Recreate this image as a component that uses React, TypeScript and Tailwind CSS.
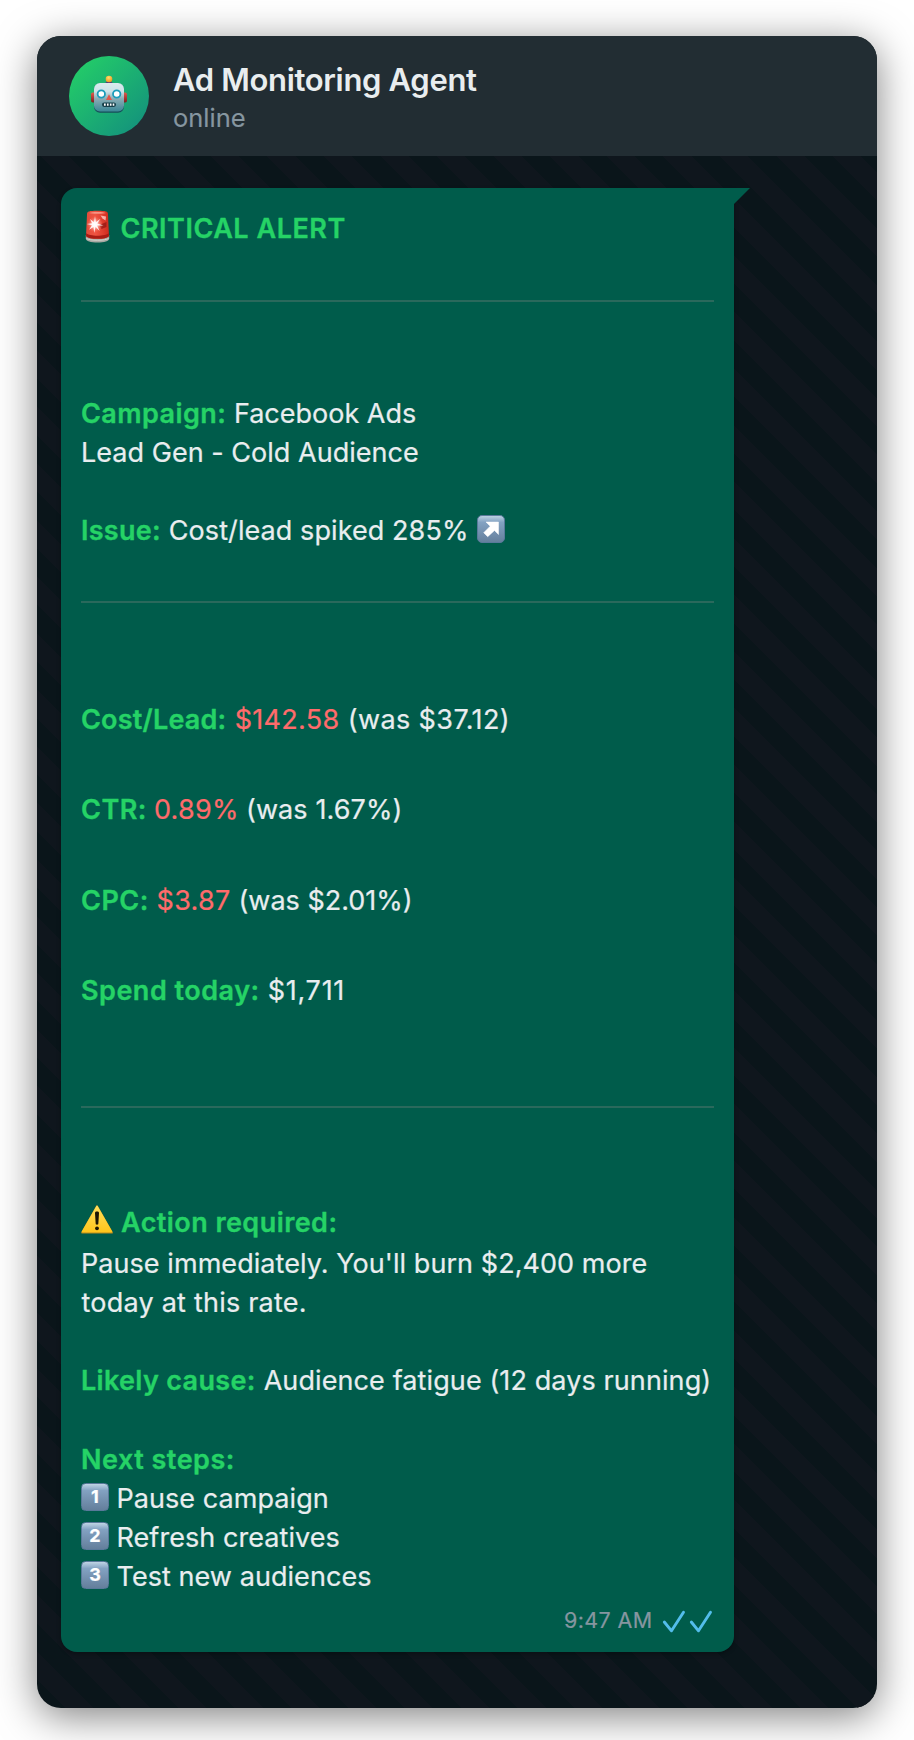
import type { ReactNode } from "react";

const Label = ({ children, className = "tracking-[0.44px]" }: { children: ReactNode; className?: string }) => (
  <span className={`font-semibold text-[#25d366] [-webkit-text-stroke:0.35px_#25d366] ${className}`}>{children}</span>
);

const Row = ({ children, className = "gap-2" }: { children: ReactNode; className?: string }) => (
  <div className={`flex h-[39.2px] items-start whitespace-nowrap leading-[39.2px] ${className}`}>{children}</div>
);

const Rule = ({ className }: { className: string }) => <div className={`h-0.5 bg-[#2a695c] ${className}`} />;

function Robot() {
  return (
    <svg width="38" height="38" viewBox="0 0 38 38">
      <defs>
        <linearGradient id="rb-face" x1="0" y1="0" x2="0" y2="1">
          <stop offset="0" stopColor="#dcebee" />
          <stop offset="0.3" stopColor="#cbe3e8" />
          <stop offset="0.55" stopColor="#8badb5" />
          <stop offset="1" stopColor="#3a8796" />
        </linearGradient>
        <linearGradient id="rb-ear" x1="0" y1="0" x2="0" y2="1">
          <stop offset="0" stopColor="#e05a4c" />
          <stop offset="1" stopColor="#7d1d22" />
        </linearGradient>
        <radialGradient id="rb-bulb" cx="0.45" cy="0.3" r="0.7">
          <stop offset="0" stopColor="#ffe36b" />
          <stop offset="1" stopColor="#f0901c" />
        </radialGradient>
      </defs>
      <rect x="1" y="17.5" width="5" height="10" rx="1.8" fill="url(#rb-ear)" />
      <rect x="32" y="17.5" width="5" height="10" rx="1.8" fill="url(#rb-ear)" />
      <path d="M15 9.5c0-2.4 1.6-3.2 4-3.2s4 .8 4 3.2z" fill="#54407c" />
      <circle cx="19" cy="4" r="3.3" fill="url(#rb-bulb)" />
      <rect x="4" y="8.5" width="30" height="29.3" rx="6" fill="#174d5a" />
      <rect x="4" y="8" width="30" height="28.5" rx="6" fill="url(#rb-face)" />
      <circle cx="11.3" cy="19" r="3.7" fill="#fff" stroke="#1b9dbb" strokeWidth="1.8" />
      <circle cx="26.7" cy="19" r="3.7" fill="#fff" stroke="#1b9dbb" strokeWidth="1.8" />
      <path d="M19 19.2l3 5.8h-6z" fill="#e2574c" />
      <rect x="12" y="27.5" width="14" height="4.4" rx="2.1" fill="#173f49" />
      <path d="M14 29.7h1.7M17 29.7h1.6M19.9 29.7h1.6M22.7 29.7h1.6" stroke="#fff" strokeWidth="2.3" />
    </svg>
  );
}

function Siren() {
  return (
    <svg width="25" height="33" viewBox="0 0 25 33">
      <defs>
        <linearGradient id="sr-dome" x1="0" y1="0" x2="1" y2="0">
          <stop offset="0" stopColor="#e04a3a" />
          <stop offset="0.4" stopColor="#f05442" />
          <stop offset="1" stopColor="#cf2a1d" />
        </linearGradient>
        <radialGradient id="sr-glow">
          <stop offset="0" stopColor="#fff" />
          <stop offset="0.35" stopColor="#ffc9c0" stopOpacity="0.85" />
          <stop offset="1" stopColor="#ff6a55" stopOpacity="0" />
        </radialGradient>
      </defs>
      <path d="M.8 25h23.4v3.5c0 2.7-5 4-11.7 4S.8 31.2.8 28.5z" fill="#a9a9a3" />
      <path d="M1.5 28.5c3 2.3 19 2.3 22 0" stroke="#d5d4cd" strokeWidth="1" fill="none" />
      <path d="M2 4.5C2 1.3 4 .8 12.5.8S23 1.3 23 4.5l1 21.5c-2.5 3.8-20.5 3.8-23 0z" fill="url(#sr-dome)" />
      <path d="M1.2 23c3 3.6 19.6 3.6 22.6 0l.2 3c-2.5 3.8-20.5 3.8-23 0z" fill="#a91c14" />
      <path d="M4 3c2-1.5 15-1.5 17 0-2 1-15 1-17 0z" fill="#f79484" />
      <path d="M15.5 5.5l5.5 1-.5 4-3-2z" fill="#fcd9d4" opacity="0.75" />
      <path d="M14 15l7.5-3v5l-5 2z" fill="#8f1511" opacity="0.7" />
      <circle cx="10" cy="14.5" r="8" fill="url(#sr-glow)" />
      <path d="M10 6l.9 6.2 4.6-3.4-3.3 4.7 6.3 1.9-6.5.2 2.7 5.4-4.2-4.2L9.2 23l-.7-6-4.5 2.7 3-4.5L1.8 14l5.3-.7L5 9l4 3.2z" fill="#fff" opacity="0.9" />
    </svg>
  );
}

function Warning() {
  return (
    <svg width="32" height="29" viewBox="0 0 32 29">
      <defs>
        <linearGradient id="wn" x1="0" y1="0" x2="0" y2="1">
          <stop offset="0" stopColor="#ffdf5b" />
          <stop offset="1" stopColor="#ffc61c" />
        </linearGradient>
      </defs>
      <path d="M16 1.2L31 27.6H1z" fill="#b98a1d" stroke="#b98a1d" strokeWidth="1.8" strokeLinejoin="round" />
      <path d="M16 1.4L30.5 26.7h-29z" fill="url(#wn)" stroke="url(#wn)" strokeWidth="1.5" strokeLinejoin="round" />
      <path d="M14 7.8c0-1.6 4-1.6 4 0l-.7 11c-.1 1.2-2.5 1.2-2.6 0z" fill="#1c1604" />
      <circle cx="16" cy="23.3" r="1.9" fill="#1c1604" />
    </svg>
  );
}

const Keycap = ({ children }: { children: ReactNode }) => (
  <span className="mt-[4.5px] flex size-7 shrink-0 items-center justify-center rounded-[4.5px] border border-[#59799a] bg-linear-to-b from-[#bfd4e4] via-[#83a2c2] via-25% to-[#647f9c] text-[18px] leading-none font-bold text-white">
    {children}
  </span>
);

const steps = ["Pause campaign", "Refresh creatives", "Test new audiences"];

export default function App() {
  return (
    <div className="h-[1740px] w-[914px] overflow-hidden bg-white pt-9 pl-[37px] font-['Inter',sans-serif] text-[27px] text-[#e9edef]">
      <div className="flex h-[1672px] w-[840px] flex-col overflow-hidden rounded-[24px] bg-[#0a151a] shadow-[0_8px_40px_rgba(0,0,0,0.5)]">
        <header className="flex h-[120px] shrink-0 items-start bg-[#222d33] px-8 pt-5">
          <div className="flex size-20 items-center justify-center rounded-full bg-linear-[135deg] from-[#25d366] to-[#128c7e] pb-1">
            <Robot />
          </div>
          <div className="ml-6 pt-[5px] whitespace-nowrap">
            <h1 className="text-[31px] leading-[38px] font-semibold tracking-[-0.33px]">Ad Monitoring Agent</h1>
            <p className="mt-[3px] text-[25.5px] leading-8 text-[#8696a0] [-webkit-text-stroke:0.15px_#8696a0]">online</p>
          </div>
        </header>

        <main className="flex-1 bg-[repeating-linear-gradient(45deg,transparent_0px,transparent_20px,#0f161d_20px,#0f161d_40px)] px-6 pt-8 [-webkit-text-stroke:0.2px]">
          <div className="relative h-[1464px] w-[673px] rounded-[16px] rounded-tr-none bg-[#005c4b] p-5 shadow-[0_2px_4px_rgba(0,0,0,0.3)]">
            <svg className="absolute top-0 left-full" width="16" height="16" viewBox="0 0 16 16">
              <path d="M0 0h16L0 16z" fill="#005c4b" />
            </svg>

            <div className="flex h-10 items-start leading-[42px]">
              <span className="mt-[1.5px] ml-1 w-[35.5px]">
                <Siren />
              </span>
              <Label className="tracking-[0.53px]">CRITICAL ALERT</Label>
            </div>

            <Rule className="mt-[52px]" />

            <Row className="mt-[91.6px] gap-[7.5px]">
              <Label>Campaign:</Label>
              <span>Facebook Ads</span>
            </Row>
            <Row>
              <span className="tracking-[0.03px]">Lead Gen - Cold Audience</span>
            </Row>
            <Row className="mt-[39.2px] gap-2">
              <Label className="tracking-[0.25px]">Issue:</Label>
              <span className="tracking-[0.08px]">Cost/lead spiked 285%</span>
              <svg className="mt-1" width="28" height="28" viewBox="0 0 28 28">
                <defs>
                  <linearGradient id="ar" x1="0" y1="0" x2="0" y2="1">
                    <stop offset="0" stopColor="#bfd4e4" />
                    <stop offset="0.25" stopColor="#83a2c2" />
                    <stop offset="1" stopColor="#647f9c" />
                  </linearGradient>
                </defs>
                <rect x="0.5" y="0.5" width="27" height="27" rx="4.5" fill="url(#ar)" stroke="#59799a" />
                <path d="M9 7h12.5v12.5l-4-4-6.8 6.2-4-4 6.5-6.5z" fill="#fff" strokeLinejoin="round" stroke="#fff" strokeWidth="0.5" />
              </svg>
            </Row>

            <Rule className="mt-[50.6px]" />

            <div className="mt-[96.6px] flex flex-col gap-[51.4px]">
              <Row className="gap-[8.3px]">
                <Label className="tracking-[0.2px]">Cost/Lead:</Label>
                <span className="tracking-[0.28px] text-[#ff6b6b]">$142.58</span>
                <span className="tracking-[0.4px]">(was $37.12)</span>
              </Row>
              <Row className="gap-[7px]">
                <Label className="tracking-[0.5px]">CTR:</Label>
                <span className="tracking-[0.3px] text-[#ff6b6b]">0.89%</span>
                <span className="tracking-[0.1px]">(was 1.67%)</span>
              </Row>
              <Row className="gap-[7.8px]">
                <Label className="tracking-[0.5px]">CPC:</Label>
                <span className="tracking-[0.3px] text-[#ff6b6b]">$3.87</span>
                <span>(was $2.01%)</span>
              </Row>
              <Row className="gap-[8px]">
                <Label className="tracking-[0.5px]">Spend today:</Label>
                <span className="tracking-[0.75px]">$1,711</span>
              </Row>
            </div>

            <Rule className="mt-[95.3px]" />

            <Row className="mt-[94.8px] gap-2">
              <span className="mt-[2px]">
                <Warning />
              </span>
              <Label>Action required:</Label>
            </Row>
            <Row className="mt-[2.2px]">
              <span className="tracking-[0.06px]">Pause immediately. You'll burn $2,400 more</span>
            </Row>
            <Row className="-mt-[0.4px]">
              <span className="ml-[0.5px] tracking-[0.22px]">today at this rate.</span>
            </Row>
            <Row className="mt-[39.1px] gap-2">
              <Label className="tracking-[0.32px]">Likely cause:</Label>
              <span className="tracking-[0.1px]">Audience fatigue (12 days running)</span>
            </Row>
            <Row className="mt-[39.8px]">
              <Label className="tracking-[0.5px]">Next steps:</Label>
            </Row>
            <div className="-mt-[0.6px]">
              {steps.map((step, i) => (
                <Row key={step} className="gap-[7.5px]">
                  <Keycap>{i + 1}</Keycap>
                  <span className="tracking-[0.06px]">{step}</span>
                </Row>
              ))}
            </div>

            <div className="mt-[7.4px] flex h-8 items-start justify-end gap-[9.6px] text-[21.5px] leading-8 text-[#8696a0]">
              <span className="tracking-[0.35px]">9:47 AM</span>
              <svg className="mt-1.5" width="52" height="24" viewBox="0 0 52 24" fill="none" stroke="#53bdeb" strokeWidth="2.9" strokeLinecap="round" strokeLinejoin="round">
                <path d="M2.3 12l7.2 8.8L21.5 2.2M29.3 12l7.2 8.8L48.5 2.2" />
              </svg>
            </div>
          </div>
        </main>
      </div>
    </div>
  );
}
